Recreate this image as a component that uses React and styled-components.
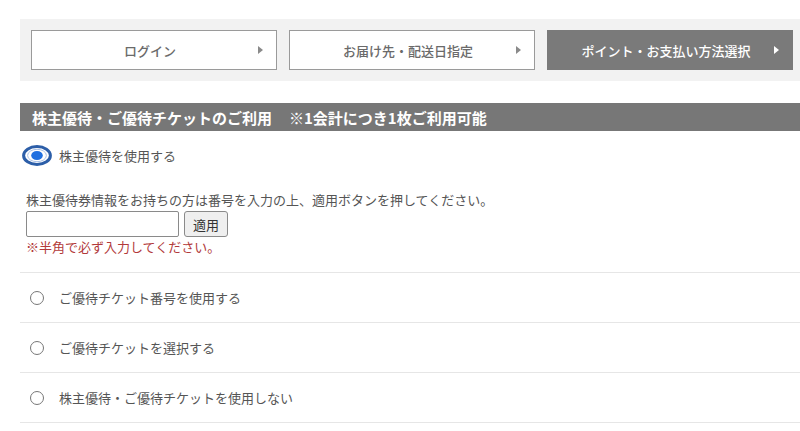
import React from 'react';
import styled, { createGlobalStyle } from 'styled-components';

const GlobalStyle = createGlobalStyle`
  html, body {
    margin: 0;
    padding: 0;
    background: #fff;
    overflow: hidden;
  }
  body {
    font-family: 'Noto Sans CJK JP', 'Noto Sans', sans-serif;
    color: #555;
  }
`;

const steps = [
  { label: 'ログイン', active: false },
  { label: 'お届け先・配送日指定', active: false },
  { label: 'ポイント・お支払い方法選択', active: true }
];

const options = [
  'ご優待チケット番号を使用する',
  'ご優待チケットを選択する',
  '株主優待・ご優待チケットを使用しない'
];

class App extends React.Component {
  getSteps() {
    return steps.map((step, i) => (
      <Step key={i} active={step.active}>
        <StepLabel>{step.label}</StepLabel>
        <StepArrow active={step.active} />
      </Step>
    ));
  }

  getOptions() {
    return options.map((text, i) => (
      <OptionRow key={i}>
        <RadioCircle />
        <OptionText>{text}</OptionText>
      </OptionRow>
    ));
  }

  render() {
    return (
      <Page>
        <GlobalStyle />
        <Stepper>{this.getSteps()}</Stepper>
        <SectionTitle>
          株主優待・ご優待チケットのご利用<Note>※1会計につき1枚ご利用可能</Note>
        </SectionTitle>
        <SelectedBlock>
          <SelectedRow>
            <svg width="30" height="21" viewBox="0 0 30 21">
              <ellipse cx="15" cy="10.5" rx="13.4" ry="9" fill="#fff" stroke="#2c5ea8" strokeWidth="3" />
              <ellipse cx="15" cy="10.5" rx="9.4" ry="6.2" fill="#fff" stroke="#a8c0e6" strokeWidth="1" />
              <ellipse cx="15" cy="10.5" rx="5.8" ry="4.6" fill="#1f6fe0" />
            </svg>
            <OptionText>株主優待を使用する</OptionText>
          </SelectedRow>
          <Description>株主優待券情報をお持ちの方は番号を入力の上、適用ボタンを押してください。</Description>
          <InputRow>
            <CodeInput type="text" />
            <ApplyButton>適用</ApplyButton>
          </InputRow>
          <ErrorText>※半角で必ず入力してください。</ErrorText>
        </SelectedBlock>
        {this.getOptions()}
      </Page>
    );
  }
}

export default App;

const Page = styled.div`
  margin-left: 20px;
  width: 800px;
  padding-top: 19px;
`;

const Stepper = styled.div`
  display: flex;
  gap: 12px;
  padding: 11px;
  background-color: #f2f2f2;
`;

const Step = styled.div`
  box-sizing: border-box;
  width: 246px;
  height: 40px;
  display: flex;
  align-items: center;
  padding: 0 13px 0 10px;
  background-color: ${props => (props.active ? '#7a7a7a' : '#fff')};
  border: 1px solid ${props => (props.active ? '#7a7a7a' : '#9a9a9a')};
  color: ${props => (props.active ? '#fff' : '#6a6a6a')};
  font-size: 13px;
  font-weight: 500;
`;

const StepLabel = styled.span`
  flex: 1;
  text-align: center;
`;

const StepArrow = styled.span`
  width: 0;
  height: 0;
  border-top: 4px solid transparent;
  border-bottom: 4px solid transparent;
  border-left: 5px solid ${props => (props.active ? '#fff' : '#8a8a8a')};
`;

const SectionTitle = styled.div`
  margin-top: 22px;
  height: 28px;
  display: flex;
  align-items: center;
  padding-left: 12px;
  background-color: #777;
  color: #fff;
  font-size: 15px;
  font-weight: bold;
`;

const Note = styled.span`
  margin-left: 17px;
`;

const SelectedBlock = styled.div`
  padding: 14px 0 16px 6px;
  border-bottom: 1px solid #e6e6e6;
`;

const SelectedRow = styled.div`
  display: flex;
  align-items: center;
  gap: 7px;
  margin-left: -4px;
  height: 21px;
`;

const OptionText = styled.span`
  font-size: 13px;
  color: #555;
`;

const Description = styled.div`
  margin-top: 25px;
  font-size: 13px;
  line-height: 18px;
  color: #555;
`;

const InputRow = styled.div`
  display: flex;
  gap: 5px;
  margin-top: 2px;
`;

const CodeInput = styled.input`
  box-sizing: border-box;
  width: 153px;
  height: 26px;
  border: 1px solid #8a8a8a;
  border-radius: 2px;
  margin: 0;
`;

const ApplyButton = styled.button`
  box-sizing: border-box;
  width: 44px;
  height: 26px;
  padding: 0;
  border: 1px solid #8a8a8a;
  border-radius: 3px;
  background-color: #efefef;
  color: #333;
  font-family: 'Noto Sans CJK JP', sans-serif;
  font-size: 13px;
`;

const ErrorText = styled.div`
  margin-top: 1px;
  font-size: 13px;
  line-height: 18px;
  color: #b23a3a;
`;

const OptionRow = styled.div`
  box-sizing: border-box;
  height: 50px;
  display: flex;
  align-items: center;
  gap: 15px;
  padding-left: 10px;
  border-bottom: 1px solid #e6e6e6;
`;

const RadioCircle = styled.span`
  box-sizing: border-box;
  width: 14px;
  height: 14px;
  border: 1px solid #777;
  border-radius: 50%;
`;
